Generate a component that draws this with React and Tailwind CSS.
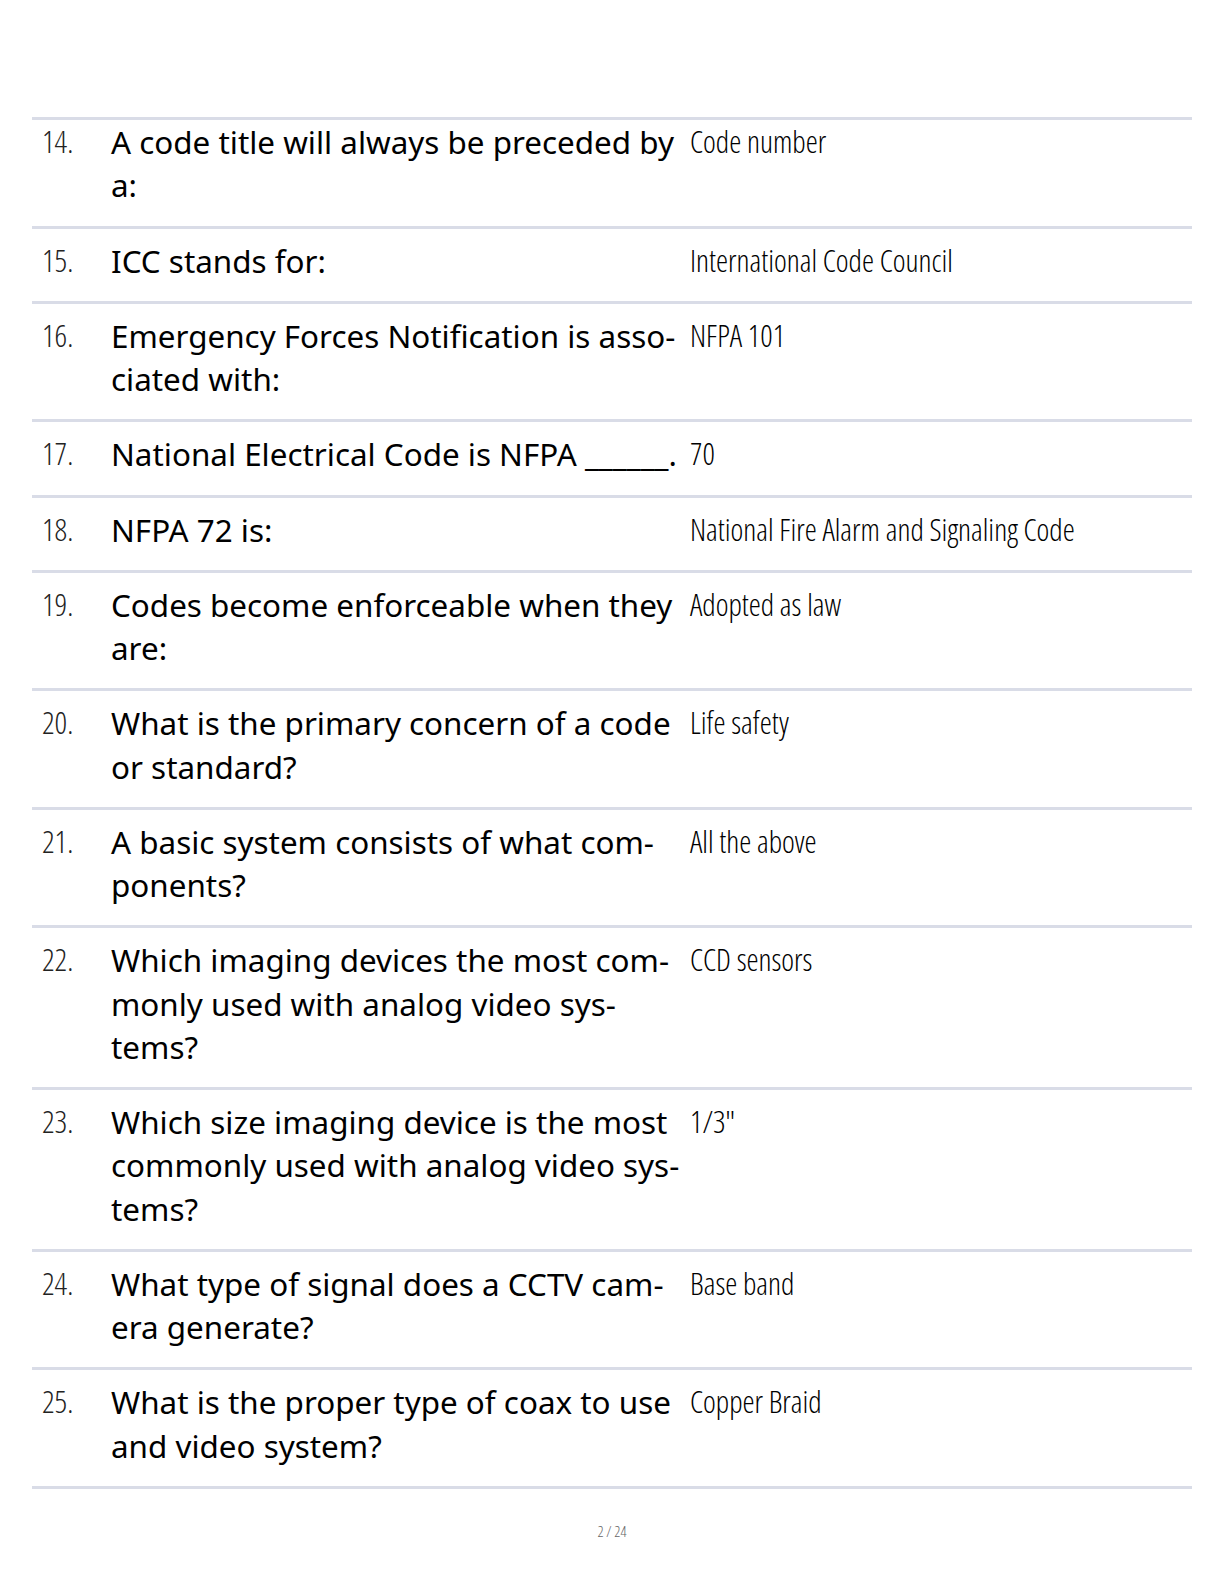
import React from 'react'

const rows = [
  { n: '14.', q: 'A code title will always be preceded by a:', a: 'Code number' },
  { n: '15.', q: 'ICC stands for:', a: 'International Code Council' },
  { n: '16.', q: 'Emergency Forces Notification is asso\u00ADciated with:', a: 'NFPA 101' },
  { n: '17.', q: 'National Electrical Code is NFPA ______.', a: '70' },
  { n: '18.', q: 'NFPA 72 is:', a: 'National Fire Alarm and Signaling Code' },
  { n: '19.', q: 'Codes become enforceable when they are:', a: 'Adopted as law' },
  { n: '20.', q: 'What is the primary concern of a code or standard?', a: 'Life safety' },
  { n: '21.', q: 'A basic system consists of what com\u00ADponents?', a: 'All the above' },
  {
    n: '22.',
    q: 'Which imaging devices the most com\u00ADmonly used with analog video sys\u00ADtems?',
    a: 'CCD sensors',
  },
  {
    n: '23.',
    q: 'Which size imaging device is the most commonly used with analog video sys\u00ADtems?',
    a: '1/3"',
  },
  { n: '24.', q: 'What type of signal does a CCTV cam\u00ADera generate?', a: 'Base band' },
  { n: '25.', q: 'What is the proper type of coax to use and video system?', a: 'Copper Braid' },
]

export default function App() {
  return (
    <div className="w-[1224px] min-h-[1584px] bg-white pt-[117px] px-[32px] text-black">
      <div className="border-t-[3px] border-[#d9dce7]">
        {rows.map((r, i) => (
          <div
            key={r.n}
            className={`flex items-start border-b-[3px] border-[#d9dce7] pb-[19.1px] leading-[43.2px] ${
              i === 0 ? 'pt-0' : 'pt-[10px]'
            }`}
          >
            {/* number */}
            <div className="w-[79px] shrink-0 pl-[10px] text-[31px] font-light font-stretch-condensed text-[#222] font-['Open_Sans','Noto_Sans',sans-serif]">
              {r.n}
            </div>
            {/* question */}
            <div className="w-[574px] shrink-0 text-[31.4px] font-['Noto_Sans',sans-serif]">
              {r.q}
            </div>
            {/* answer */}
            <div className="flex-1 pl-[5px] text-[30.5px] font-light font-stretch-condensed font-['Open_Sans','Noto_Sans',sans-serif]">
              {r.a}
            </div>
          </div>
        ))}
      </div>

      <div className="mt-[31px] text-center text-[15px] font-light font-stretch-condensed text-[#666] font-['Open_Sans','Noto_Sans',sans-serif]">
        2 / 24
      </div>
    </div>
  )
}
